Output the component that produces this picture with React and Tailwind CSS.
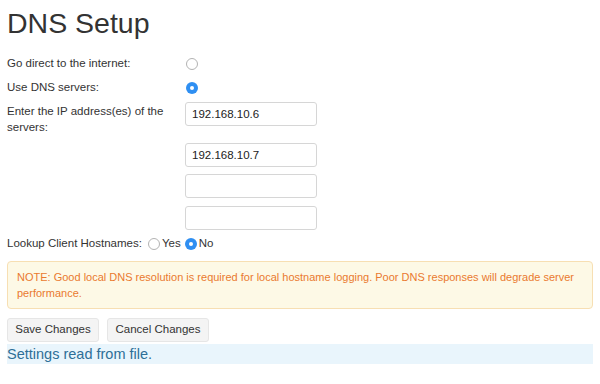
import React, { useState } from "react";

const Radio = ({ checked, onClick }) => (
  <span
    onClick={onClick}
    className={`inline-flex h-[12px] w-[12px] shrink-0 items-center justify-center rounded-full ${
      checked ? "bg-[#2f8ff2]" : "border border-[#b3b3b3] bg-white"
    }`}
  >
    {checked && <span className="h-[4px] w-[4px] rounded-full bg-white" />}
  </span>
);

const TextInput = ({ value, onChange, className = "" }) => (
  <input
    value={value}
    onChange={onChange}
    className={`h-6 w-[132px] rounded-[3px] border border-[#d6d6d6] bg-white pl-[6px] text-[11.5px] text-[#222] outline-none ${className}`}
  />
);

export default function App() {
  const [mode, setMode] = useState("dns");
  const [servers, setServers] = useState(["192.168.10.6", "192.168.10.7", "", ""]);
  const [lookup, setLookup] = useState(false);

  const setServer = (i, v) => {
    const next = [...servers];
    next[i] = v;
    setServers(next);
  };

  return (
    <div
      className="w-[600px] h-[384px] bg-white px-[7px] text-[#333] text-[11.5px]"
      style={{ fontFamily: '"Liberation Sans", Arial, sans-serif' }}
    >
      <h1 className="pt-[6px] text-[28.5px] leading-[34px] text-[#333]">DNS Setup</h1>

      {/* Mode */}
      <div className="mt-[12px] flex h-6 items-center">
        <div className="w-[179px]">Go direct to the internet:</div>
        <Radio checked={mode === "direct"} onClick={() => setMode("direct")} />
      </div>
      <div className="flex h-6 items-center">
        <div className="w-[179px]">Use DNS servers:</div>
        <Radio checked={mode === "dns"} onClick={() => setMode("dns")} />
      </div>

      {/* Servers */}
      <div className="mt-[2px] flex">
        <div className="w-[178px] pr-[16px] pt-px leading-4">
          Enter the IP address(es) of the servers:
        </div>
        <TextInput value={servers[0]} onChange={(e) => setServer(0, e.target.value)} />
      </div>
      <div className="ml-[178px] mt-[8px] flex flex-col">
        <TextInput value={servers[1]} onChange={(e) => setServer(1, e.target.value)} />
        <TextInput className="mt-[7px]" value={servers[2]} onChange={(e) => setServer(2, e.target.value)} />
        <TextInput className="mt-[8px]" value={servers[3]} onChange={(e) => setServer(3, e.target.value)} />
      </div>

      {/* Lookup */}
      <div className="mt-[2px] flex h-6 items-center">
        <span className="mr-[6px]">Lookup Client Hostnames:</span>
        <Radio checked={lookup} onClick={() => setLookup(true)} />
        <span className="ml-[2px] mr-[4px]">Yes</span>
        <Radio checked={!lookup} onClick={() => setLookup(false)} />
        <span className="ml-[2px]">No</span>
      </div>

      <div className="mt-[5px] rounded-[4px] border border-[#f7dfb3] bg-[#fdf9e6] px-[9px] py-[7px] text-[11px] leading-4 text-[#ea7a2f]">
        NOTE: Good local DNS resolution is required for local hostname logging. Poor DNS responses will degrade server
        performance.
      </div>

      <div className="mt-[9px] flex gap-[8px]">
        <button className="h-6 w-[92px] rounded-[3px] border border-[#e6e6e6] bg-[#f4f4f4] text-[11.5px] text-[#333]">
          Save Changes
        </button>
        <button className="h-6 w-[102px] rounded-[3px] border border-[#e6e6e6] bg-[#f4f4f4] text-[11.5px] text-[#333]">
          Cancel Changes
        </button>
      </div>

      <div className="mt-[2px] h-[20px] bg-[#e9f5fc] text-[14.5px] leading-[20px] text-[#2e6f97]">
        Settings read from file.
      </div>
    </div>
  );
}
